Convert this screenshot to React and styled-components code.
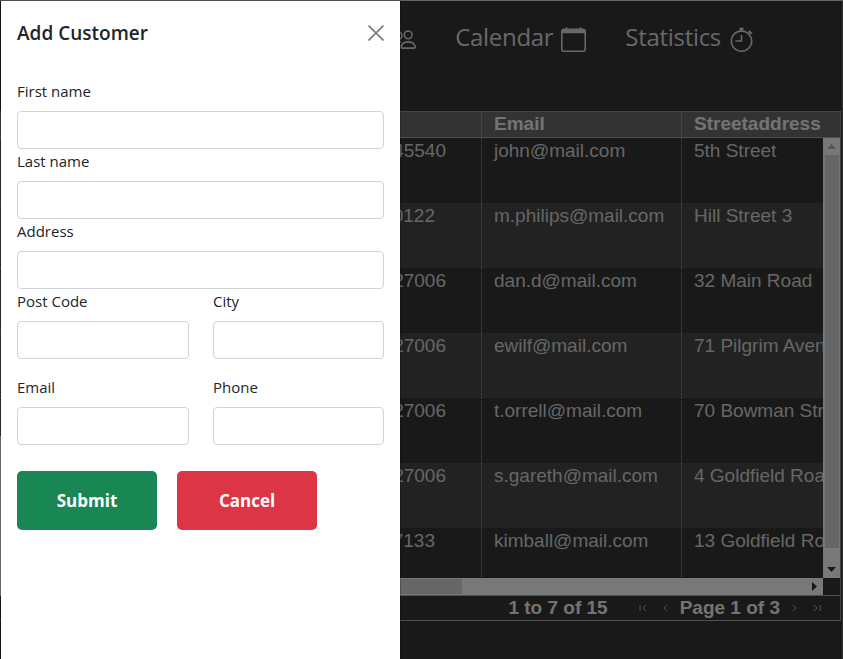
import React from 'react'
import styled, { createGlobalStyle } from 'styled-components'
import { BsPeople, BsCalendar, BsStopwatch } from 'react-icons/bs'

const Global = createGlobalStyle`
  html, body { margin: 0; padding: 0; height: 100%; overflow: hidden; background: #323232; }
  * { box-sizing: border-box; }
`

const Page = styled.div`
  width: 843px;
  height: 659px;
  background: #323232;
  border-top: 1px solid #c8c8c8;
  border-right: 1px solid #666;
  color: #ccc;
  display: flex;
  flex-direction: column;
`

const Nav = styled.nav`
  height: 110px;
  display: flex;
  justify-content: flex-end;
  gap: 39px;
  padding: 19px 88px 0 0;
  font-family: "Open Sans", "Noto Sans", sans-serif;
  font-size: 24px;
  letter-spacing: -0.3px;
  color: #d0d0d0;
`

const NavItem = styled.div`
  display: flex;
  align-items: flex-start;
  gap: 8px;
  height: 36px;
  line-height: 34px;
  svg { margin-top: 7px; }
`

const Grid = styled.div`
  width: 841px;
  height: 510px;
  border-right: 1px solid #8a8a8a;
  border-bottom: 1px solid #a0a0a0;
  font-family: "Liberation Sans", Arial, sans-serif;
  font-size: 19px;
  display: flex;
  flex-direction: column;
`

const HeadRow = styled.div`
  display: grid;
  grid-template-columns: 281px 200px 200px 1fr;
  height: 27px;
  background: #666;
  border-top: 1px solid #8a8a8a;
  border-bottom: 1px solid #a0a0a0;
  font-weight: 700;
  line-height: 23px;
  color: #e6e6e6;
`

const HeadCell = styled.div`
  padding-left: 12px;
  border-left: 1px solid #8a8a8a;
  white-space: nowrap;
`

const Body = styled.div`
  display: flex;
  flex-wrap: wrap;
  height: 457px;
  overflow: hidden;
`

const Rows = styled.div`
  width: 823px;
  height: 440px;
  overflow: hidden;
`

const Row = styled.div`
  display: grid;
  grid-template-columns: 281px 200px 200px 142px;
  height: 65px;
  background: ${({ $alt }) => ($alt ? '#444' : '#323232')};
  line-height: 25px;
`

const Cell = styled.div`
  padding-left: 12px;
  border-left: 1px dotted #999;
  white-space: nowrap;
  overflow: hidden;
`

const PhoneCell = styled(Cell)`
  padding: 0 ${({ $inset }) => $inset}px 0 0;
  text-align: right;
`

const VScroll = styled.div`
  width: 17px;
  height: 440px;
  background: #f0f0f0;
  display: flex;
  flex-direction: column;
  align-items: center;
`

const VArrow = styled.div`
  flex: none;
  height: 17px;
  width: 17px;
  display: flex;
  align-items: center;
  justify-content: center;
  margin-top: ${({ $end }) => ($end ? 'auto' : '0')};
`

const VThumb = styled.div`
  flex: none;
  width: 14px;
  height: 393px;
  background: #cdcdcd;
`

const HScroll = styled.div`
  position: relative;
  width: 823px;
  height: 17px;
  background: #f0f0f0;
  display: flex;
  justify-content: flex-end;
  align-items: center;
  padding-right: 6px;
`

const HThumb = styled.div`
  position: absolute;
  left: 0;
  top: 1px;
  width: 462px;
  height: 15px;
  background: #cdcdcd;
`

const Corner = styled.div`
  width: 17px;
  height: 17px;
  background: #323232;
`

const Pager = styled.div`
  height: 25px;
  border-top: 1px solid #a0a0a0;
  display: flex;
  justify-content: flex-end;
  align-items: center;
  padding-right: 19px;
  font-weight: 700;
  color: #e6e6e6;
`

const Summary = styled.span`
  margin-right: 31px;
`

const PagerIcon = styled.svg`
  flex: none;
  width: 8px;
  height: 8px;
  fill: none;
  stroke: #aaa;
  margin: ${({ $m }) => $m};
`

const Backdrop = styled.div`
  position: fixed;
  inset: 0;
  background: rgba(0, 0, 0, 0.5);
`

const Offcanvas = styled.aside`
  position: fixed;
  left: 0;
  top: 0;
  bottom: 0;
  width: 401px;
  background: #fff;
  background-clip: padding-box;
  border: 1px solid rgba(0, 0, 0, 0.2);
  border-bottom: 0;
  color: #212529;
  font-family: "Open Sans", "Noto Sans", sans-serif;
  font-size: 15px;

  &::before {
    content: '';
    position: absolute;
    left: -1px;
    top: 435px;
    bottom: 63px;
    width: 1px;
    background: #666;
  }
`

const Header = styled.header`
  display: flex;
  justify-content: space-between;
  align-items: center;
  padding: 17px 16px 15px;
  height: 62px;
`

const Title = styled.h5`
  margin: 0;
  font-size: 19px;
  font-weight: 600;
  line-height: 30px;
`

const Close = styled.button`
  padding: 0;
  border: 0;
  background: none;
  width: 16px;
  height: 16px;
  color: #7b7b7b;
  display: block;
  svg { display: block; }
`

const Form = styled.form`
  padding: 16px 16px 0;
`

const Field = styled.div`
  display: block;
`

const Label = styled.label`
  display: block;
  height: 32px;
  line-height: 24px;
`

const Input = styled.input`
  display: block;
  width: 100%;
  height: 38px;
  border: 1px solid #ced4da;
  border-radius: 4px;
  background: #fff;
`

const Split = styled.div`
  display: grid;
  grid-template-columns: 172px 171px;
  column-gap: 24px;
  margin-bottom: ${({ $mb }) => $mb || '0'};
`

const Actions = styled.div`
  display: flex;
  gap: 20px;
  margin-top: 26px;
`

const Btn = styled.button`
  width: 140px;
  height: 59px;
  border: 0;
  border-radius: 5px;
  color: #fff;
  background: ${({ $tone }) => ($tone === 'danger' ? '#dc3545' : '#198754')};
  font-family: "Open Sans", "Noto Sans", sans-serif;
  font-size: 17px;
  font-weight: 700;
`

const rows = [
  ['45540', 35, 'john@mail.com', '5th Street'],
  ['0122', 46, 'm.philips@mail.com', 'Hill Street 3'],
  ['27006', 35, 'dan.d@mail.com', '32 Main Road'],
  ['27006', 35, 'ewilf@mail.com', '71 Pilgrim Avenue'],
  ['27006', 35, 't.orrell@mail.com', '70 Bowman Street'],
  ['27006', 35, 's.gareth@mail.com', '4 Goldfield Road'],
  ['7133', 46, 'kimball@mail.com', '13 Goldfield Road'],
]

const App = () => (
  <>
    <Global />
    <Page>
      <Nav>
        <NavItem>
          Customers
          <BsPeople size={25} />
        </NavItem>
        <NavItem>
          Calendar
          <BsCalendar size={25} />
        </NavItem>
        <NavItem>
          Statistics
          <BsStopwatch size={25} />
        </NavItem>
      </Nav>
      <Grid>
        <HeadRow>
          <HeadCell />
          <HeadCell />
          <HeadCell>Email</HeadCell>
          <HeadCell>Streetaddress</HeadCell>
        </HeadRow>
        <Body>
          <Rows>
            {rows.map((r, i) => (
              <Row key={r[2]} $alt={i % 2 === 1}>
                <Cell />
                <PhoneCell $inset={r[1]}>{r[0]}</PhoneCell>
                <Cell>{r[2]}</Cell>
                <Cell>{r[3]}</Cell>
              </Row>
            ))}
          </Rows>
          <VScroll>
            <VArrow>
              <svg width="9" height="5" viewBox="0 0 9 5"><path d="M4.5 0L9 5H0z" fill="#aaa" /></svg>
            </VArrow>
            <VThumb />
            <VArrow $end>
              <svg width="9" height="5" viewBox="0 0 9 5"><path d="M0 0h9L4.5 5z" fill="#333" /></svg>
            </VArrow>
          </VScroll>
          <HScroll>
            <HThumb />
            <svg width="5" height="9" viewBox="0 0 5 9"><path d="M0 0l5 4.5L0 9z" fill="#333" /></svg>
          </HScroll>
          <Corner />
        </Body>
        <Pager>
          <Summary>1 to 7 of 15</Summary>
          <PagerIcon viewBox="0 0 8 8" $m="0 14px 0 0"><path d="M1 1v6M7 1L4 4l3 3" /></PagerIcon>
          <PagerIcon viewBox="0 0 8 8" $m="0 11px 0 0"><path d="M6 1L3 4l3 3" /></PagerIcon>
          Page 1 of 3
          <PagerIcon viewBox="0 0 8 8" $m="0 14px 0 11px"><path d="M2 1l3 3-3 3" /></PagerIcon>
          <PagerIcon viewBox="0 0 8 8" $m="0"><path d="M1 1l3 3-3 3M7 1v6" /></PagerIcon>
        </Pager>
      </Grid>
    </Page>
    <Backdrop />
    <Offcanvas>
      <Header>
        <Title>Add Customer</Title>
        <Close aria-label="Close">
          <svg width="16" height="16" viewBox="0 0 16 16" fill="none" stroke="currentColor" strokeWidth="1.6"><path d="M0.5 0.5l15 15M15.5 0.5l-15 15" /></svg>
        </Close>
      </Header>
      <Form>
        <Field>
          <Label>First name</Label>
          <Input />
        </Field>
        <Field>
          <Label>Last name</Label>
          <Input />
        </Field>
        <Field>
          <Label>Address</Label>
          <Input />
        </Field>
        <Split $mb="16px">
          <Field>
            <Label>Post Code</Label>
            <Input />
          </Field>
          <Field>
            <Label>City</Label>
            <Input />
          </Field>
        </Split>
        <Split>
          <Field>
            <Label>Email</Label>
            <Input />
          </Field>
          <Field>
            <Label>Phone</Label>
            <Input />
          </Field>
        </Split>
        <Actions>
          <Btn type="button">Submit</Btn>
          <Btn type="button" $tone="danger">Cancel</Btn>
        </Actions>
      </Form>
    </Offcanvas>
  </>
)

export default App
